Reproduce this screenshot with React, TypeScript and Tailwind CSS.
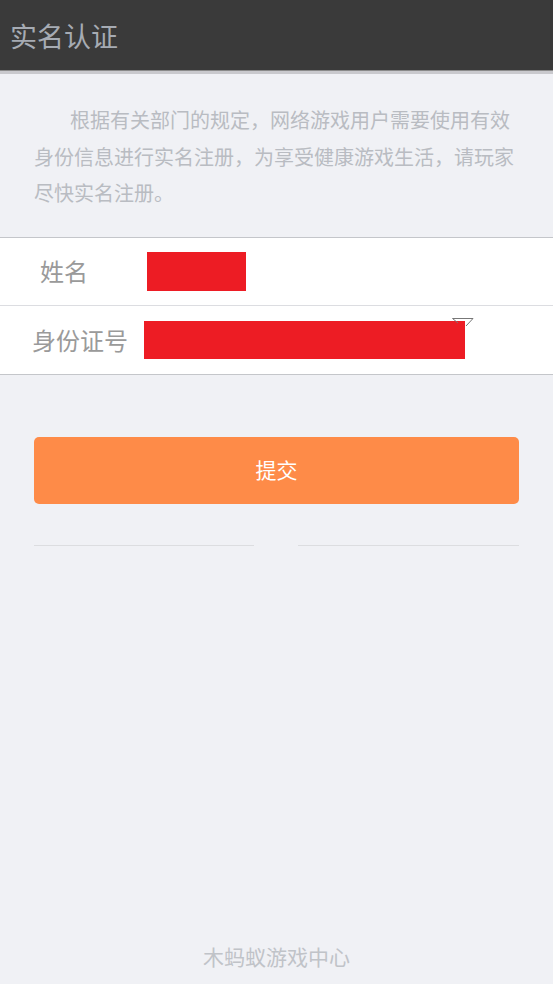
export default function App() {
  const font = { fontFamily: '"Noto Sans CJK SC", "Noto Sans", sans-serif' };
  return (
    <div className="flex min-h-[984px] w-[553px] flex-col bg-[#f0f1f5]" style={font}>
      <div className="flex h-[70px] items-center bg-[#3a3a3a] px-[10px]">
        <h1 className="text-[27px] leading-none text-[#a6abb3]">实名认证</h1>
      </div>
      <div className="h-px bg-[#8a8a8a]" />
      <div className="h-[3px] bg-[#c9c9cd]" />

      <p className="px-[34px] pt-[28px] pb-[25px] text-[20px] leading-[36.5px] text-[#b9bcc2] indent-[36px]">
        根据有关部门的规定，网络游戏用户需要使用有效身份信息进行实名注册，为享受健康游戏生活，请玩家尽快实名注册。
      </p>

      <div className="border-y border-[#c4c6ca] bg-white">
        <div className="flex h-[68px] items-center border-b border-[#dcdde1]">
          <span className="w-[147px] pl-[40px] text-[24px] text-[#9a9a9a]">姓名</span>
          <div className="h-[39px] w-[99px] bg-[#ed1c24]" />
        </div>
        <div className="relative flex h-[68px] items-center">
          <span className="w-[144px] pl-[32px] text-[24px] text-[#9a9a9a]">身份证号</span>
          <div className="h-[38px] w-[321px] bg-[#ed1c24]" />
          <svg className="absolute left-[452px] top-[12px]" width="22" height="9" viewBox="0 0 22 9">
            <path d="M0.5 0.5 H21 L14 8" fill="none" stroke="#777" strokeWidth="1" />
            <path d="M0.5 0.5 L6 5" fill="none" stroke="#777" strokeWidth="1" />
          </svg>
        </div>
      </div>

      <div className="px-[34px] pt-[62px]">
        <button className="flex h-[67px] w-full items-center justify-center rounded-[5px] bg-[#fe8b48] text-[21px] text-white">
          提交
        </button>
        <div className="mt-[41px] flex justify-between">
          <div className="h-px w-[220px] bg-[#dcdde0]" />
          <div className="h-px w-[221px] bg-[#dcdde0]" />
        </div>
      </div>

      <div className="flex-1" />
      <p className="pb-[12px] text-center text-[21px] text-[#c0c3c8]">木蚂蚁游戏中心</p>
    </div>
  );
}
